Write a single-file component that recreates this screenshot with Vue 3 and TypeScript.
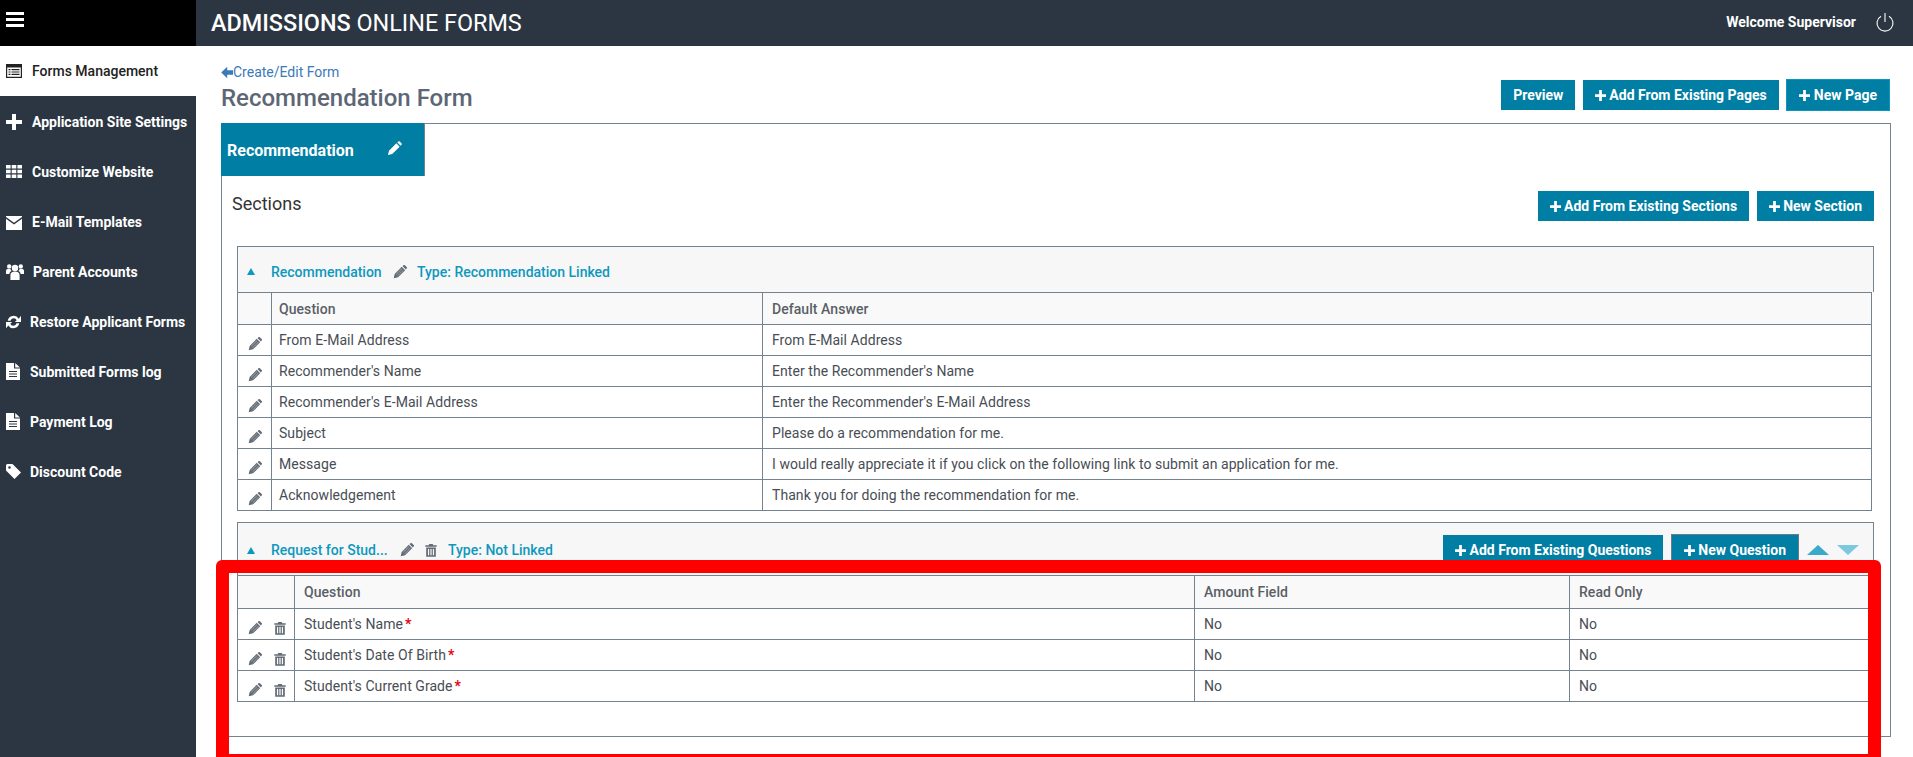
<script setup lang="ts">
interface NavItem { label: string; icon: string; slot: number; active?: boolean }

const nav: NavItem[] = [
  { label: 'Forms Management', icon: 'i-list', slot: 26, active: true },
  { label: 'Application Site Settings', icon: 'i-plus', slot: 26 },
  { label: 'Customize Website', icon: 'i-grid', slot: 26 },
  { label: 'E-Mail Templates', icon: 'i-mail', slot: 26 },
  { label: 'Parent Accounts', icon: 'i-group', slot: 27 },
  { label: 'Restore Applicant Forms', icon: 'i-refresh', slot: 24 },
  { label: 'Submitted Forms log', icon: 'i-file', slot: 24 },
  { label: 'Payment Log', icon: 'i-file', slot: 24 },
  { label: 'Discount Code', icon: 'i-tag', slot: 24 },
]

const firstRows = [
  ['From E-Mail Address', 'From E-Mail Address'],
  ["Recommender's Name", "Enter the Recommender's Name"],
  ["Recommender's E-Mail Address", "Enter the Recommender's E-Mail Address"],
  ['Subject', 'Please do a recommendation for me.'],
  ['Message', 'I would really appreciate it if you click on the following link to submit an application for me.'],
  ['Acknowledgement', 'Thank you for doing the recommendation for me.'],
]

const secondRows = ["Student's Name", "Student's Date Of Birth", "Student's Current Grade"]
</script>

<template>
  <div class="page">
    <svg class="sprite" aria-hidden="true">
      <symbol id="i-pencil" viewBox="0 0 16 16">
        <path d="M1 15l1.1-4.6L10 2.500 13.500 6l-7.900 7.900z" />
        <path d="M11 1.500l.9-.9a1.200 1.200 0 0 1 1.700 0l1.800 1.800a1.200 1.200 0 0 1 0 1.700l-.9.9z" />
      </symbol>
      <symbol id="i-pencil-striped" viewBox="0 0 16 16">
        <path d="M.8 15.200l1.100-5L10 2.100 13.900 6l-8.100 8.100z" />
        <path d="M11 1.300l.9-.9a1.200 1.200 0 0 1 1.700 0l2 2a1.200 1.200 0 0 1 0 1.700l-.9.9z" />
        <path d="M3.600 10.700L10.400 4M5.300 12.400L12 5.700" fill="none" stroke="#fff" stroke-opacity=".55" stroke-width=".8" />
      </symbol>
      <symbol id="i-trash" viewBox="0 0 16 16">
        <path d="M1.500 2.600h3.900L6 1h4l.6 1.600h3.900v1.700h-13z" />
        <path fill-rule="evenodd" d="M2.500 5h11v10.800h-11zM4.500 6.800v7.300h1.400V6.800zM7.300 6.800v7.300h1.400V6.800zM10.100 6.800v7.300h1.400V6.800z" />
      </symbol>
      <symbol id="i-list" viewBox="0 0 16 14">
        <path fill-rule="evenodd" d="M0 0h16v14H0zM1.200 3.400v9.400h13.600V3.400z" />
        <path d="M2.500 5h2v1.200h-2zM5.500 5h8v1.200h-8zM2.500 7.400h2v1.200h-2zM5.500 7.400h8v1.200h-8zM2.500 9.800h2V11h-2zM5.500 9.800h8V11h-8z" />
      </symbol>
      <symbol id="i-plus" viewBox="0 0 16 16">
        <path d="M6 0h4v6h6v4h-6v6H6v-6H0V6h6z" />
      </symbol>
      <symbol id="i-grid" viewBox="0 0 16 13">
        <path d="M0 0h4.600v3.600H0zM5.700 0h4.600v3.600H5.700zM11.400 0H16v3.600h-4.600zM0 4.700h4.600v3.600H0zM5.700 4.700h4.600v3.600H5.700zM11.400 4.700H16v3.600h-4.600zM0 9.400h4.600V13H0zM5.700 9.400h4.600V13H5.700zM11.400 9.400H16V13h-4.600z" />
      </symbol>
      <symbol id="i-mail" viewBox="0 0 16 14">
        <path d="M0 1l8 5.800L16 1V0H0z" />
        <path d="M0 2.800V14h16V2.800L8 8.600z" />
      </symbol>
      <symbol id="i-group" viewBox="0 0 18 17">
        <circle cx="9" cy="5" r="3.200" />
        <circle cx="3.200" cy="3.400" r="2.200" />
        <circle cx="14.800" cy="3.400" r="2.200" />
        <path d="M4.400 17v-4.600C4.400 9.800 6 8.600 9 8.600s4.600 1.200 4.600 3.800V17z" />
        <path d="M0 11V8c0-1.500 1-2.300 3.200-2.300.5 0 .8 0 1.200.2.200 1 .7 1.700 1.300 2.200C4 8.800 3.400 10 3.400 11zM18 11V8c0-1.500-1-2.300-3.200-2.300-.5 0-.8 0-1.200.2-.2 1-.7 1.700-1.300 2.200 1.700.7 2.300 1.900 2.300 2.900z" />
      </symbol>
      <symbol id="i-refresh" viewBox="0 0 16 16">
        <path d="M13.600 4.400A6.500 6.500 0 0 0 1.800 6.600h3a3.500 3.500 0 0 1 6.600-.5L9.400 8H16V1.400z" />
        <path d="M2.400 11.600A6.500 6.500 0 0 0 14.200 9.400h-3a3.500 3.500 0 0 1-6.600.5L6.600 8H0v6.600z" />
      </symbol>
      <symbol id="i-file" viewBox="0 0 14 17">
        <path fill-rule="evenodd" d="M0 0h8v5.500h6V17H0zM3 8v1h8V8zM3 10.500v1h8v-1zM3 13v1h8v-1z" />
        <path d="M9.200 0L14 4.400H9.200z" />
      </symbol>
      <symbol id="i-tag" viewBox="0 0 15 15">
        <path fill-rule="evenodd" d="M0 1.500A1.500 1.500 0 0 1 1.500 0h5L15 8.500 8.500 15 0 6.500zM3.500 2.200a1.300 1.300 0 1 0 0 2.600 1.300 1.300 0 0 0 0-2.600z" />
      </symbol>
      <symbol id="i-back" viewBox="0 0 12 12">
        <path d="M6.200.2L.2 6l6 5.800V8.300H12V3.700H6.200z" />
      </symbol>
      <symbol id="i-btnplus" viewBox="0 0 12 12">
        <path d="M4.500 0h3v4.500H12v3H7.500V12h-3V7.500H0v-3h4.500z" />
      </symbol>
    </svg>

    <header class="topbar">
      <div class="brand">
        <span class="burger"><i></i><i></i><i></i></span>
      </div>
      <div class="bar">
        <h1 class="app-title"><strong>ADMISSIONS</strong> ONLINE FORMS</h1>
        <span class="welcome">Welcome Supervisor</span>
        <svg class="power" viewBox="0 0 20 20" aria-hidden="true">
          <path d="M6 4.200a8 8 0 1 0 8 0" />
          <path d="M10 1v9" />
        </svg>
      </div>
    </header>

    <div class="body">
      <nav class="sidebar">
        <a
          v-for="item in nav"
          :key="item.label"
          class="nav-item"
          :class="{ active: item.active }"
        >
          <span class="nav-icon" :style="{ width: item.slot + 'px' }">
            <svg :class="item.icon"><use :href="'#' + item.icon" /></svg>
          </span>
          {{ item.label }}
        </a>
      </nav>

      <main class="main">
        <div class="head">
          <div>
            <a class="back"><svg><use href="#i-back" /></svg>Create/Edit Form</a>
            <h2 class="title">Recommendation Form</h2>
          </div>
          <div class="actions">
            <button class="btn">Preview</button>
            <button class="btn"><svg class="plus"><use href="#i-btnplus" /></svg>Add From Existing Pages</button>
            <button class="btn focus"><svg class="plus wide"><use href="#i-btnplus" /></svg>New Page</button>
          </div>
        </div>

        <section class="box">
          <div class="tab">
            <span class="tab-label">Recommendation</span>
            <svg class="tab-pencil"><use href="#i-pencil" /></svg>
          </div>

          <div class="sections-row">
            <h3>Sections</h3>
            <div class="actions">
              <button class="btn"><svg class="plus"><use href="#i-btnplus" /></svg>Add From Existing Sections</button>
              <button class="btn"><svg class="plus"><use href="#i-btnplus" /></svg>New Section</button>
            </div>
          </div>

          <div class="section">
            <div class="sec-head first">
              <span class="caret"></span>
              <span class="sec-name">Recommendation</span>
              <svg class="ico pencil-head"><use href="#i-pencil-striped" /></svg>
              <span class="sec-type">Type: Recommendation Linked</span>
            </div>
            <table class="grid">
              <colgroup><col class="c-one" /><col class="c-q" /><col /></colgroup>
              <thead>
                <tr><th></th><th>Question</th><th>Default Answer</th></tr>
              </thead>
              <tbody>
                <tr v-for="row in firstRows" :key="row[0]">
                  <td class="tools"><svg class="ico"><use href="#i-pencil-striped" /></svg></td>
                  <td>{{ row[0] }}</td>
                  <td class="wide-pad">{{ row[1] }}</td>
                </tr>
              </tbody>
            </table>
          </div>

          <div class="section second">
            <div class="sec-head">
              <span class="caret"></span>
              <span class="sec-name short">Request for Stud...</span>
              <svg class="ico pencil-head2"><use href="#i-pencil-striped" /></svg>
              <svg class="ico trash-head"><use href="#i-trash" /></svg>
              <span class="sec-type">Type: Not Linked</span>
              <div class="sec-actions">
                <button class="btn"><svg class="plus"><use href="#i-btnplus" /></svg>Add From Existing Questions</button>
                <button class="btn outlined"><svg class="plus"><use href="#i-btnplus" /></svg>New Question</button>
                <span class="arrow up"></span>
                <span class="arrow down"></span>
              </div>
            </div>
            <table class="grid grid-b">
              <colgroup><col class="c-two" /><col class="c-q2" /><col class="c-amount" /><col /></colgroup>
              <thead>
                <tr><th></th><th>Question</th><th>Amount Field</th><th>Read Only</th></tr>
              </thead>
              <tbody>
                <tr v-for="name in secondRows" :key="name">
                  <td class="tools">
                    <svg class="ico"><use href="#i-pencil-striped" /></svg>
                    <svg class="ico trash"><use href="#i-trash" /></svg>
                  </td>
                  <td>{{ name }}<span class="req">*</span></td>
                  <td>No</td>
                  <td>No</td>
                </tr>
              </tbody>
            </table>
          </div>
        </section>

        <div class="highlight"></div>
      </main>
    </div>
  </div>
</template>

<style scoped>
.page {
  height: 757px;
  overflow: hidden;
  font-family: Roboto, "Liberation Sans", sans-serif;
  font-size: 14px;
  color: #444;
  background: #fff;
}
.sprite { position: absolute; width: 0; height: 0; }
svg { fill: currentColor; display: block; }

.topbar { display: flex; height: 46px; }
.brand { width: 196px; background: #000; padding: 12px 0 0 6px; box-sizing: border-box; }
.burger { display: flex; flex-direction: column; gap: 3px; width: 18px; }
.burger i { display: block; height: 3px; background: #fff; }
.bar {
  flex: 1;
  display: flex;
  align-items: center;
  background: #2b3642;
  color: #fff;
  padding: 0 18px 0 15px;
}
.app-title { margin: 0; flex: 1; font-size: 23.4px; font-weight: 400; line-height: 46px; }
.app-title strong { font-weight: 500; }
.welcome { font-size: 14px; font-weight: 700; margin: -2px 19px 0 0; }
.power { width: 20px; height: 20px; fill: none; stroke: #fff; stroke-width: 1.1; margin-top: -3px; }

.body { display: flex; height: 711px; }
.sidebar { width: 196px; flex: none; background: #2b3642; color: #fff; }
.nav-item {
  display: flex;
  align-items: center;
  height: 50px;
  box-sizing: border-box;
  padding: 1px 0 0 6px;
  font-size: 14px;
  font-weight: 700;
}
.nav-item.active { background: #fff; color: #222; font-weight: 500; padding-top: 0; }
.nav-icon { flex: none; display: block; }
.i-list { width: 16px; height: 14px; }
.i-plus { width: 16px; height: 16px; }
.i-grid { width: 16px; height: 13px; }
.i-mail { width: 16px; height: 14px; margin-top: 3px; }
.i-group { width: 18px; height: 17px; }
.i-refresh { width: 15px; height: 16px; }
.i-file { width: 14px; height: 17px; }
.i-tag { width: 15px; height: 15px; }

.main { flex: 1; position: relative; padding: 0 23px 0 25px; min-width: 0; }
.head { display: flex; justify-content: space-between; align-items: flex-end; height: 77px; }
.back { display: flex; align-items: center; color: #3b7ab8; font-size: 14px; line-height: 18px; }
.back svg { width: 12px; height: 13px; }
.title { margin: 3px 0 11px; font-size: 24px; font-weight: 500; line-height: 28px; color: #5c6675; }
.actions { display: flex; gap: 8px; align-items: center; }
.head .actions { margin-bottom: 12px; }

.btn {
  display: inline-flex;
  align-items: center;
  height: 30px;
  padding: 0 12px;
  border: 0;
  background: #007ea3;
  color: #fff;
  font: 700 14px Roboto, "Liberation Sans", sans-serif;
  white-space: nowrap;
}
.btn.focus { height: 32px; border: 1px solid #0a97bd; padding: 0 12px; margin-left: -1px; }
.btn.outlined { height: 32px; border: 1px solid #6c7a89; }
.plus { width: 11px; height: 11px; margin-right: 3px; }
.plus.wide { margin-right: 4px; }

.box {
  border: 1px solid #75828f;
  height: 614px;
  margin-right: -1px;
  box-sizing: border-box;
}
.tab {
  display: flex;
  align-items: center;
  justify-content: space-between;
  width: 204px;
  height: 53px;
  margin: -1px 0 0 -1px;
  padding: 0 22px 0 6px;
  box-sizing: border-box;
  background: #007ea3;
  border-right: 1px solid #75828f;
  color: #fff;
  font-size: 16px;
  font-weight: 700;
}
.tab-label { margin-top: 2px; }
.tab-pencil { width: 15px; height: 15px; margin-top: -2px; }

.sections-row {
  display: flex;
  justify-content: space-between;
  align-items: center;
  height: 30px;
  margin: 15px 16px 25px 10px;
}
.sections-row h3 { margin: -5px 0 0; font-size: 18px; font-weight: 400; color: #333; }

.section { margin: 0 16px 0 15px; }
.section.second { margin-top: 11px; }
.sec-head {
  display: flex;
  align-items: center;
  height: 53px;
  padding: 0 14px 0 9px;
  background: #f7f7f7;
  border: 1px solid #75828f;
  border-bottom: 0;
  box-sizing: border-box;
  color: #0e98bf;
  font-weight: 500;
  padding-top: 2px;
  white-space: nowrap;
}
.sec-head.first { height: 46px; padding-top: 4px; }
.caret {
  width: 0;
  height: 0;
  border: 4.5px solid transparent;
  border-top: 0;
  border-bottom: 7px solid #0e98bf;
  margin-right: 16px;
}
.sec-name { width: 113px; }
.sec-name.short { width: 116px; }
.sec-type { font-weight: 500; margin-left: 1px; }
.second .sec-type { margin-left: 0; }
.ico { width: 14px; height: 14px; color: #636b75; flex: none; }
.pencil-head { margin: 0 9px 0 9px; }
.pencil-head2 { margin: 0 10px 0 13px; }
.trash-head { margin-right: 10px; }
.sec-actions { margin-left: auto; display: flex; align-items: center; gap: 8px; }
.arrow { width: 0; height: 0; border: 11px solid transparent; }
.arrow.up { border-top: 0; border-bottom: 10px solid #3aa9cb; }
.arrow.down { border-bottom: 0; border-top: 10px solid #7cc8df; }

.grid {
  width: calc(100% - 2px);
  border-collapse: collapse;
  table-layout: fixed;
}
.grid th, .grid td {
  border: 1px solid #75828f;
  padding: 0 7px;
  height: 31px;
  text-align: left;
  color: #484d54;
  box-sizing: border-box;
  letter-spacing: .06px;
}
.grid th { height: 32px; background: #f9f9f9; font-weight: 500; color: #5a5f66; }
.grid-b th { height: 33px; }
.grid .wide-pad, .grid th:nth-child(3) { padding-left: 9px; }
.grid .tools { padding: 5px 0 0 10px; vertical-align: middle; white-space: nowrap; }
.tools .ico { display: inline-block; vertical-align: middle; }
.tools .trash { margin-left: 11px; }
.c-one { width: 34px; }
.c-q { width: 491px; }
.c-two { width: 57px; }
.c-q2 { width: 900px; }
.c-amount { width: 375px; }
.grid-b th, .grid-b td { padding-left: 9px; }
.grid-b th:first-child, .grid-b td:first-child { padding-left: 10px; }
.req { color: #e8000f; font-weight: 700; margin-left: 2px; }

.highlight {
  position: absolute;
  left: 20px;
  top: 514px;
  width: 1665px;
  height: 207px;
  border: 13px solid #f00;
  border-radius: 6px;
  box-sizing: border-box;
  pointer-events: none;
}
</style>
